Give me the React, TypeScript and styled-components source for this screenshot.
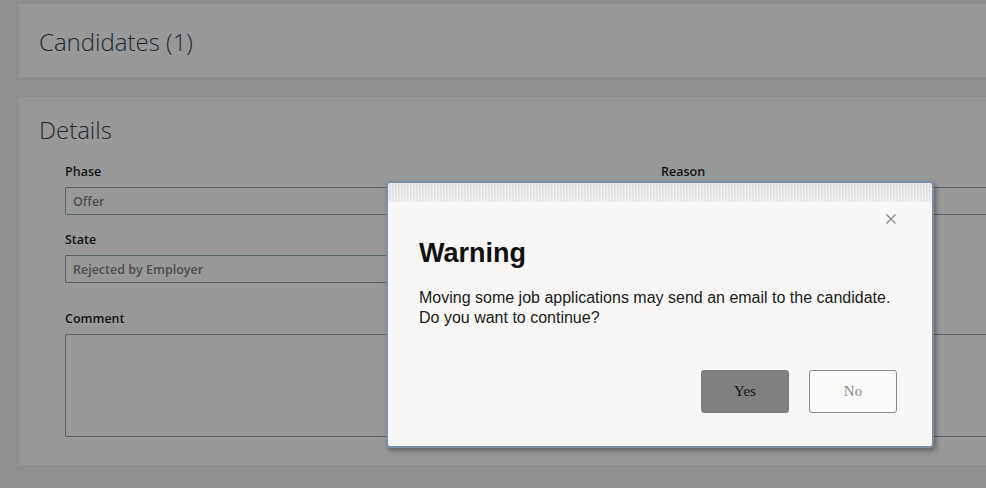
import React from "react";
import styled, { createGlobalStyle } from "styled-components";

const Global = createGlobalStyle`
  html, body { margin: 0; padding: 0; background: #8f8f8f; }
  body { font-family: "Open Sans", "Noto Sans", sans-serif; }
  * { box-sizing: border-box; }
`;

const Page = styled.div`
  position: relative;
  width: 986px;
  height: 488px;
  overflow: hidden;
  background: #8f8f8f;
  padding: 4px 0 0 19px;
  display: flex;
  flex-direction: column;
  gap: 20px;
`;

const Panel = styled.section<{ $h: number }>`
  width: 1200px;
  height: ${(p) => p.$h}px;
  background: #989898;
  padding: 0 0 0 20px;
  display: flex;
  flex-direction: column;
`;

const PanelTitle = styled.h2<{ $top: number }>`
  margin: ${(p) => p.$top}px 0 0 0;
  font-family: "Open Sans", sans-serif;
  font-weight: 300;
  font-size: 24px;
  line-height: 32px;
  color: #1f2a33;
`;

const Form = styled.div`
  margin: 17px 0 0 26px;
  display: grid;
  grid-template-columns: 576px 1fr;
  column-gap: 20px;
  align-items: start;
`;

const Field = styled.div<{ $mt?: number; $full?: boolean }>`
  display: flex;
  flex-direction: column;
  gap: 6px;
  margin-top: ${(p) => p.$mt ?? 0}px;
  grid-column: ${(p) => (p.$full ? "1 / span 2" : "auto")};
`;

const Label = styled.label`
  font-family: "Open Sans", sans-serif;
  font-weight: 600;
  font-size: 12.5px;
  line-height: 18px;
  color: #141414;
`;

const Input = styled.div`
  height: 28px;
  border: 1px solid #56636b;
  border-radius: 1px;
  padding: 0 7px;
  display: flex;
  align-items: center;
  font-family: "Open Sans", sans-serif;
  font-weight: 600;
  font-size: 12.5px;
  color: #4d4d4d;
`;

const TextArea = styled.div`
  height: 103px;
  border: 1px solid #56636b;
  border-radius: 1px;
`;

const Dialog = styled.div`
  position: absolute;
  left: 386px;
  top: 181px;
  width: 548px;
  height: 267px;
  border: 2px solid #7890a6;
  border-radius: 5px 5px 4px 4px;
  background: #f9f8f6;
  box-shadow: 2px 3px 5px rgba(0, 0, 0, 0.35);
  display: flex;
  flex-direction: column;
  overflow: hidden;
`;

const TitleStrip = styled.div`
  height: 19px;
  background-color: #e9e8e6;
  background-image: repeating-linear-gradient(
      90deg,
      rgba(255, 255, 255, 0.8) 0px,
      rgba(255, 255, 255, 0) 1px,
      rgba(0, 0, 0, 0.05) 2px,
      rgba(255, 255, 255, 0.5) 3px
    ),
    linear-gradient(180deg, #e2e1df 0%, #eeedeb 100%);
`;

const DialogBody = styled.div`
  flex: 1;
  display: flex;
  flex-direction: column;
  padding: 0 35px 0 31px;
`;

const CloseRow = styled.div`
  height: 34px;
  display: flex;
  justify-content: flex-end;
  align-items: center;
  margin-right: 1px;
`;

const CloseButton = styled.button`
  border: none;
  background: none;
  padding: 0;
  width: 10px;
  height: 10px;
  display: flex;
  cursor: pointer;
`;

const Heading = styled.h1`
  margin: 2px 0 0 0;
  font-family: "Liberation Sans", Arial, sans-serif;
  font-weight: 700;
  font-size: 27px;
  line-height: 30px;
  color: #111;
`;

const Message = styled.p`
  margin: 20px 0 0 0;
  font-family: "Liberation Sans", Arial, sans-serif;
  font-size: 16px;
  line-height: 20px;
  color: #1a1a1a;
`;

const Actions = styled.div`
  margin-top: 42px;
  display: flex;
  justify-content: flex-end;
  gap: 20px;
`;

const Btn = styled.button<{ $primary?: boolean }>`
  width: 88px;
  height: 43px;
  border-radius: 3px;
  border: 1px solid ${(p) => (p.$primary ? "#7c7c7c" : "#8c8c8c")};
  background: ${(p) => (p.$primary ? "#808080" : "#fbfbfa")};
  color: ${(p) => (p.$primary ? "#111" : "#8a8a8a")};
  font-family: "Liberation Serif", "Times New Roman", serif;
  font-size: 15px;
  padding: 0;
`;

export default function App() {
  return (
    <>
      <Global />
      <Page>
        <Panel $h={73}>
          <PanelTitle $top={22}>Candidates (1)</PanelTitle>
        </Panel>
        <Panel $h={368}>
          <PanelTitle $top={17}>Details</PanelTitle>
          <Form>
            <Field>
              <Label>Phase</Label>
              <Input>Offer</Input>
            </Field>
            <Field>
              <Label>Reason</Label>
              <Input />
            </Field>
            <Field $mt={16}>
              <Label>State</Label>
              <Input>Rejected by Employer</Input>
            </Field>
            <div />
            <Field $mt={27} $full>
              <Label>Comment</Label>
              <TextArea />
            </Field>
          </Form>
        </Panel>
        <Dialog role="dialog">
          <TitleStrip />
          <DialogBody>
            <CloseRow>
              <CloseButton aria-label="Close">
                <svg width="10" height="10" viewBox="0 0 10 10">
                  <path d="M0.5 0.5 L9.5 9.5 M9.5 0.5 L0.5 9.5" stroke="#8a8a8a" strokeWidth="1.4" />
                </svg>
              </CloseButton>
            </CloseRow>
            <Heading>Warning</Heading>
            <Message>
              Moving some job applications may send an email to the candidate.
              <br />
              Do you want to continue?
            </Message>
            <Actions>
              <Btn $primary>Yes</Btn>
              <Btn>No</Btn>
            </Actions>
          </DialogBody>
        </Dialog>
      </Page>
    </>
  );
}
